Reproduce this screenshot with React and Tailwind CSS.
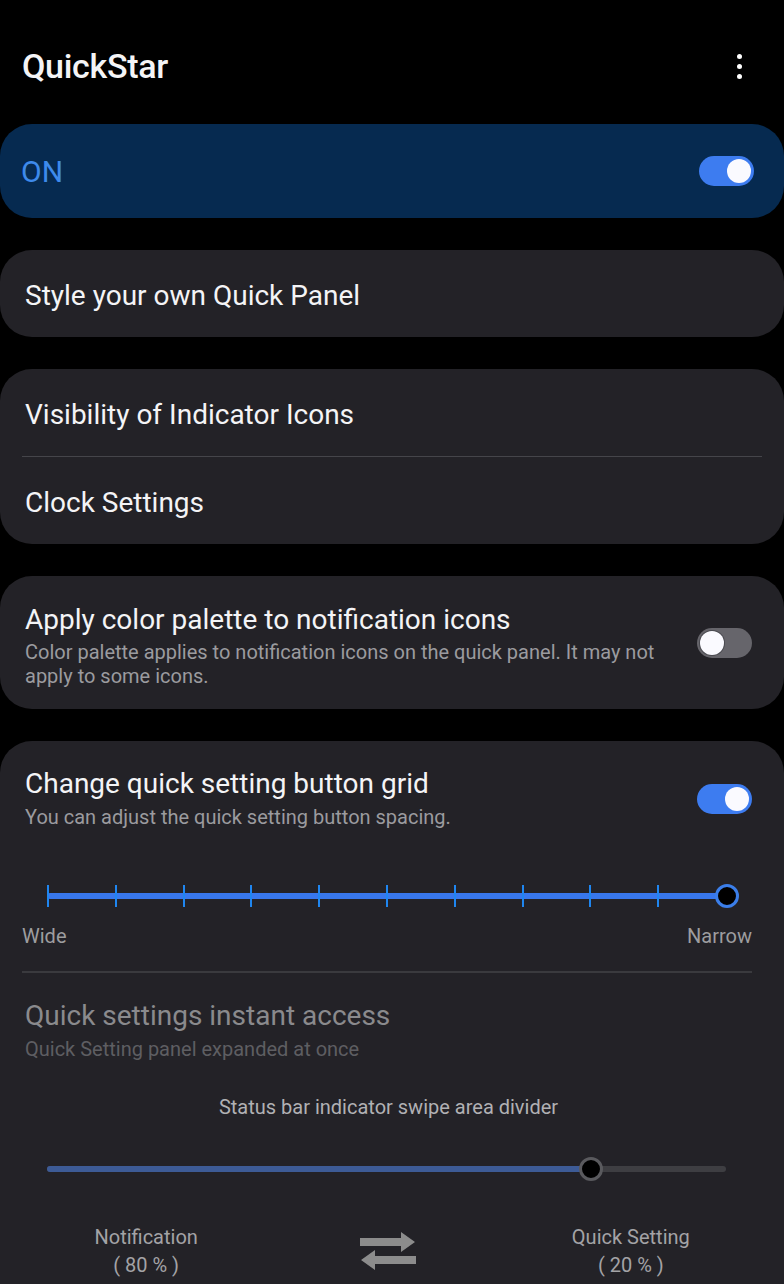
import React from "react";

const Toggle = ({ on }) => (
  <div
    className={
      "relative h-[30px] w-[55px] shrink-0 rounded-full " +
      (on ? "bg-[#3d7cf0]" : "bg-[#66656b]")
    }
  >
    <div
      className={
        "absolute top-[3px] h-[24px] w-[24px] rounded-full bg-[#fafaff] " +
        (on ? "right-[3px]" : "left-[3px] shadow-[0_0_0_1px_#4a4a50]")
      }
    />
  </div>
);

const Card = ({ className = "", children }) => (
  <div className={"rounded-[32px] " + className}>{children}</div>
);

const SwapIcon = () => (
  <svg width="56" height="42" viewBox="0 0 56 42" fill="#8c8c8c">
    <path d="M0 8h41V2l14 10-14 10v-6H0z" />
    <path d="M56 26H15v-6L1 30l14 10v-6h41z" />
  </svg>
);

export default function App() {
  const ticks = Array.from({ length: 11 });
  return (
    <div
      className="h-[1284px] w-[784px] overflow-hidden bg-black text-[#f4f4f6]"
      style={{ fontFamily: "Roboto, 'Noto Sans', sans-serif" }}
    >
      {/* header */}
      <div className="flex h-[124px] items-start justify-between pl-[22px] pr-[42px] pt-[46px]">
        <h1 className="text-[34px] font-medium leading-[40px] tracking-[-0.3px]">QuickStar</h1>
        <div className="mt-[8px] flex flex-col items-center gap-[5px]">
          <span className="h-[5px] w-[5px] rounded-full bg-white" />
          <span className="h-[5px] w-[5px] rounded-full bg-white" />
          <span className="h-[5px] w-[5px] rounded-full bg-white" />
        </div>
      </div>

      <div className="flex flex-col gap-8">
        {/* master switch */}
        <Card className="flex h-[94px] items-center justify-between bg-[#062a50] pl-[21px] pr-[30px]">
          <span className="text-[30px] text-[#3e8aeb]">ON</span>
          <Toggle on />
        </Card>

        <Card className="flex h-[87px] items-center bg-[#232227] pl-[25px] pt-[4px]">
          <span className="text-[28px]">Style your own Quick Panel</span>
        </Card>

        <Card className="bg-[#232227]">
          <div className="flex h-[87px] items-center pl-[25px] pt-[4px] text-[28px]">Visibility of Indicator Icons</div>
          <div className="mx-[22px] h-px bg-[#45454a]" />
          <div className="flex h-[87px] items-center pl-[25px] pt-[4px] text-[28px]">Clock Settings</div>
        </Card>

        <Card className="flex h-[133px] items-center justify-between bg-[#232227] pl-[25px] pr-[32px]">
          <div className="w-[640px] pt-[6px]">
            <div className="text-[28px] leading-[32px]">Apply color palette to notification icons</div>
            <div className="mt-1 text-[20px] leading-[24px] text-[#9b9b9f]">
              Color palette applies to notification icons on the quick panel. It may not apply to some icons.
            </div>
          </div>
          <Toggle />
        </Card>

        <Card className="h-[600px] bg-[#232227] pl-[25px] pr-[32px] pt-[27px]">
          <div className="flex items-center justify-between">
            <div>
              <div className="text-[28px] leading-[32px]">Change quick setting button grid</div>
              <div className="mt-[5px] text-[20px] leading-[24px] text-[#9b9b9f]">
                You can adjust the quick setting button spacing.
              </div>
            </div>
            <Toggle on />
          </div>

          {/* grid slider */}
          <div className="relative ml-[22px] mr-[25px] mt-[47px] h-[40px]">
            <div className="absolute left-0 right-0 top-[17px] h-[6px] rounded-full bg-[#3877ec]" />
            <div className="absolute inset-0 flex items-center justify-between">
              {ticks.map((_, i) => (
                <span key={i} className="h-[22px] w-[2px] bg-[#1f86f0]" />
              ))}
            </div>
            <div className="absolute right-[-12px] top-[8px] h-[24px] w-[24px] rounded-full border-[3px] border-[#3b7ee9] bg-black" />
          </div>
          <div className="ml-[-3px] mt-[8px] flex justify-between text-[20px] leading-[24px] text-[#9d9d9f]">
            <span>Wide</span>
            <span>Narrow</span>
          </div>

          <div className="ml-[-3px] mt-[23px] h-[2px] bg-[#3a3a3e]" />

          <div className="mt-[27px] text-[28px] leading-[32px] text-[#8a8a8d]">Quick settings instant access</div>
          <div className="mt-[5px] text-[20px] leading-[24px] text-[#5e5e62]">Quick Setting panel expanded at once</div>

          <div className="mt-[34px] text-center text-[20px] leading-[24px] text-[#b1b1b4]">
            Status bar indicator swipe area divider
          </div>

          {/* divider slider */}
          <div className="relative ml-[22px] mr-[26px] mt-[38px] h-[24px]">
            <div className="absolute left-0 right-0 top-[9px] h-[6px] rounded-full bg-[#3e3e42]" />
            <div className="absolute left-0 top-[9px] h-[6px] w-[544px] rounded-full bg-[#3d5b96]" />
            <div className="absolute left-[532px] top-0 h-[24px] w-[24px] rounded-full border-[3px] border-[#5a5a5e] bg-black" />
          </div>

          <div className="mt-[42px] grid grid-cols-3 items-center text-[20px] leading-[28px] text-[#a3a3a6]">
            <div className="flex flex-col items-center">
              <span>Notification</span>
              <span>( 80 % )</span>
            </div>
            <div className="flex justify-center">
              <SwapIcon />
            </div>
            <div className="flex flex-col items-center">
              <span>Quick Setting</span>
              <span>( 20 % )</span>
            </div>
          </div>
        </Card>
      </div>
    </div>
  );
}
